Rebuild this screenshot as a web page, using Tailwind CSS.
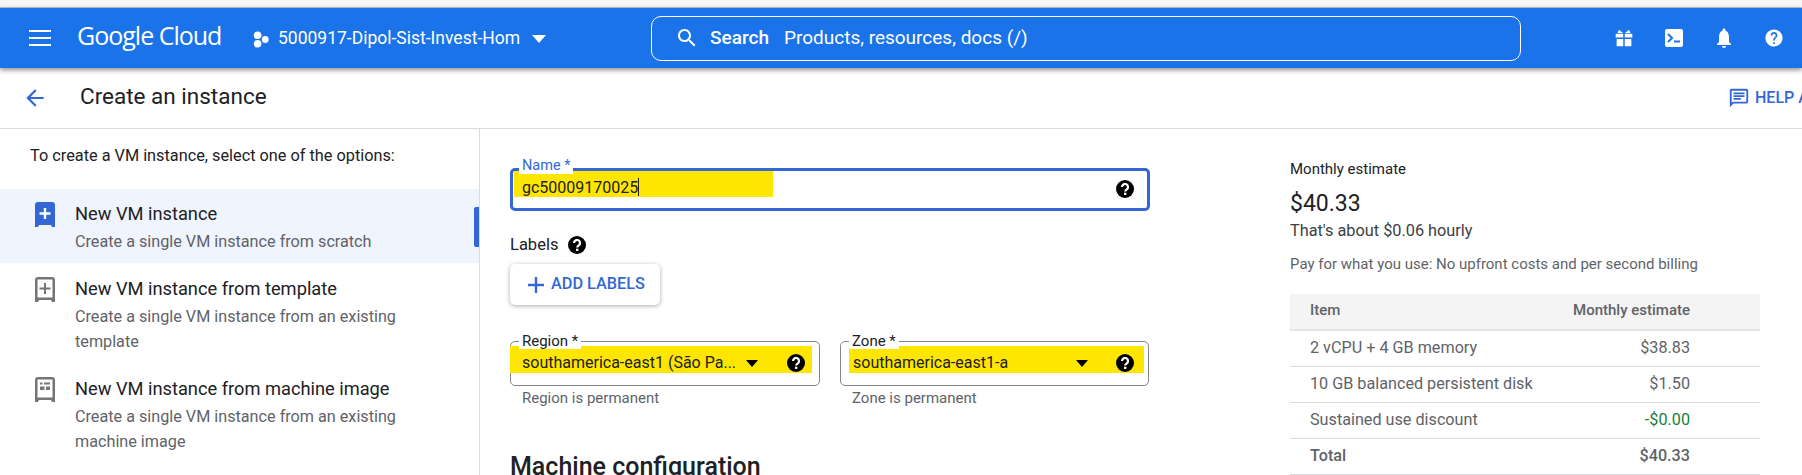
<!DOCTYPE html>
<html lang="en">
<head>
    <meta charset="UTF-8">
    <title>Create an instance</title>
    <script src="https://cdn.jsdelivr.net/npm/@tailwindcss/browser@4"></script>
</head>
<body class="h-[475px] overflow-hidden bg-white font-['Roboto',sans-serif] text-[#202124]">
    <div class="h-2 bg-[#f6f6f6] border-b border-[#c4c4c4]"></div>

    <!-- top bar -->
    <header class="relative z-10 h-[60px] flex items-center bg-[#1a73e8] text-white shadow-[0_2px_5px_rgba(0,0,0,0.45)]">
        <svg class="ml-[29px] w-[22px] h-[18px]" viewBox="0 0 22 18" fill="#fff"><rect y="1" width="22" height="2"/><rect y="8" width="22" height="2"/><rect y="15" width="22" height="2"/></svg>
        <span class="ml-[26px] w-[146px] text-[25px] font-['Open_Sans',sans-serif] tracking-[-1px] mt-[-5px] whitespace-nowrap">Google Cloud</span>
        <svg class="ml-[30px] mt-[3px] w-[16px] h-[17px]" viewBox="0 0 18 20" fill="#fff"><circle cx="5" cy="5" r="4.5"/><circle cx="5" cy="15" r="4.5"/><circle cx="14" cy="10" r="4"/></svg>
        <span class="ml-[9px] w-[245px] text-[17.5px] whitespace-nowrap">5000917-Dipol-Sist-Invest-Hom</span>
        <svg class="ml-[8px] mt-[2px] w-[16px] h-[8px]" viewBox="0 0 16 8" fill="#fff"><path d="M1 0h14L8 8z"/></svg>
        <div class="ml-[104px] w-[870px] h-[45px] flex items-center border border-white rounded-[10px]">
            <svg class="ml-[23px] w-[24px] h-[24px]" viewBox="0 0 24 24" fill="#fff"><path d="M15.5 14h-.79l-.28-.27C15.41 12.59 16 11.11 16 9.5 16 5.91 13.09 3 9.5 3S3 5.91 3 9.5 5.91 16 9.5 16c1.61 0 3.09-.59 4.23-1.57l.27.28v.79l5 4.99L20.49 19l-4.99-5zm-6 0C7.01 14 5 11.99 5 9.5S7.01 5 9.5 5 14 7.01 14 9.5 11.99 14 9.5 14z"/></svg>
            <span class="ml-[11px] text-[19px] font-medium">Search</span>
            <span class="ml-[15px] text-[19px]">Products, resources, docs (/)</span>
        </div>
        <div class="ml-[91px] flex items-center gap-[26px]">
            <svg class="w-[24px] h-[24px]" viewBox="-1 -1 26 26" fill="#fff"><path d="M3 7.500h8.200v4H3zM12.800 7.500H21v4h-8.200zM4 13h7.200v8H4zM12.800 13H20v8h-7.200z"/><path d="M6.500 3l4.500 3.500H5zM17.500 3L13 6.500h6z"/></svg>
            <svg class="w-[24px] h-[24px]" viewBox="0 0 24 24"><rect x="3" y="3" width="18" height="18" rx="2" fill="#fff"/><path d="M6 8l4 4-4 4" fill="none" stroke="#1a73e8" stroke-width="2"/><rect x="12" y="14.500" width="6" height="2" fill="#1a73e8"/></svg>
            <svg class="w-[24px] h-[24px]" viewBox="0 0 24 24" fill="#fff"><path d="M12 22c1.100 0 2-.9 2-2h-4c0 1.100.89 2 2 2zm5-6v-5c0-3.070-1.140-5.640-3.500-6.320V4c0-.83-.67-1.500-1.500-1.500s-1.500.67-1.500 1.500v.68C8.130 5.360 7 7.920 7 11v5l-2 2v1h14v-1l-2-2z"/></svg>
            <svg class="w-[24px] h-[24px]" viewBox="-2 -2 28 28" fill="#fff"><path d="M12 2C6.480 2 2 6.480 2 12s4.480 10 10 10 10-4.480 10-10S17.520 2 12 2zm1 17h-2v-2h2v2zm2.070-7.750l-.9.920C13.450 12.900 13 13.500 13 15h-2v-.5c0-1.100.45-2.100 1.170-2.830l1.240-1.260c.37-.36.59-.86.59-1.410 0-1.100-.9-2-2-2s-2 .9-2 2H8c0-2.210 1.790-4 4-4s4 1.790 4 4c0 .88-.36 1.680-.93 2.250z"/></svg>
        </div>
    </header>

    <!-- page title -->
    <div class="h-[61px] flex items-center border-b border-[#dadce0]">
        <svg class="ml-[22px] w-[26px] h-[26px]" viewBox="0 0 24 24" fill="#3367d6"><path d="M20 11H7.830l5.590-5.590L12 4l-8 8 8 8 1.410-1.410L7.830 13H20v-2z"/></svg>
        <h1 class="ml-[32px] mt-[-2px] text-[22.500px] whitespace-nowrap">Create an instance</h1>
        <div class="ml-auto w-[74px] flex items-center gap-[5px] overflow-hidden text-[#3367d6] text-[16px] font-medium whitespace-nowrap">
            <svg class="w-[22px] h-[22px] shrink-0" viewBox="0 0 24 24" fill="#3367d6"><path d="M20 2H4c-1.100 0-2 .9-2 2v18l4-4h14c1.100 0 2-.9 2-2V4c0-1.100-.9-2-2-2zm0 14H5.170L4 17.170V4h16v12zM6 12h8v2H6zm0-3h12v2H6zm0-3h12v2H6z"/></svg>
            <span>HELP A</span>
        </div>
    </div>

    <main class="flex">
        <!-- options -->
        <aside class="w-[480px] h-[346px] shrink-0 border-r border-[#dadce0]">
            <p class="ml-[30px] mt-[17px] h-[43px] text-[16.300px] leading-[20px] whitespace-nowrap">To create a VM instance, select one of the options:</p>
            <div class="relative h-[74px] flex gap-[20px] pl-[35px] bg-[#f0f4fc]">
                <svg class="mt-[13px] w-[20px] h-[25px] shrink-0" viewBox="0 0 20 25"><path d="M3 0h14a3 3 0 0 1 3 3v22h-3l-1-2H4l-1 2H0V3a3 3 0 0 1 3-3z" fill="#3367d6"/><path d="M8.800 6h2.400v4.300h4.300v2.400h-4.300V17H8.800v-4.300H4.500v-2.400h4.300z" fill="#fff"/></svg>
                <div>
                    <p class="mt-[13px] text-[18.250px] leading-[24px]">New VM instance</p>
                    <p class="mt-[4px] text-[16.200px] leading-[24px] text-[#5f6368] whitespace-nowrap">Create a single VM instance from scratch</p>
                </div>
                <div class="absolute right-0 top-[18px] w-[5px] h-[40px] rounded-l-[2px] bg-[#3367d6]"></div>
            </div>
            <div class="h-[99px] flex gap-[20px] pl-[35px]">
                <svg class="mt-[14px] w-[20px] h-[25px] shrink-0" viewBox="0 0 20 25"><path fill-rule="evenodd" d="M3 0h14a3 3 0 0 1 3 3v22h-3l-1-2H4l-1 2H0V3a3 3 0 0 1 3-3zM2.500 2.500v18h15v-18z" fill="#757575"/><path d="M9 6h2v4.500h4.500v2H11V17H9v-4.500H4.500v-2H9z" fill="#757575"/></svg>
                <div>
                    <p class="mt-[14px] text-[18.250px] leading-[24px] whitespace-nowrap">New VM instance from template</p>
                    <p class="mt-[3px] w-[345px] text-[16.200px] leading-[25px] text-[#5f6368]">Create a single VM instance from an existing template</p>
                </div>
            </div>
            <div class="flex gap-[20px] pl-[35px]">
                <svg class="mt-[15px] w-[20px] h-[25px] shrink-0" viewBox="0 0 20 25"><path fill-rule="evenodd" d="M3 0h14a3 3 0 0 1 3 3v22h-3l-1-2H4l-1 2H0V3a3 3 0 0 1 3-3zM2.500 2.500v18h15v-18z" fill="#757575"/><path d="M5 5.500h2.500v2H5zM9 5.500h6v2H9zM5 9.500h4.500v3.500H5zM11 9.500h4v3.500h-4z" fill="#757575"/></svg>
                <div>
                    <p class="mt-[15px] text-[18.250px] leading-[24px] whitespace-nowrap">New VM instance from machine image</p>
                    <p class="mt-[3px] w-[345px] text-[16.200px] leading-[25px] text-[#5f6368]">Create a single VM instance from an existing machine image</p>
                </div>
            </div>
        </aside>

        <!-- form -->
        <section class="w-[670px] shrink-0 pl-[30px] pt-[39px]">
            <div class="relative w-[640px] h-[43px] border-[3px] border-[#3367d6] rounded-[5px] flex items-start">
                <span class="absolute left-[6px] top-[-13px] px-[3px] bg-white text-[#3367d6] text-[14.500px] leading-[16px]">Name *</span>
                <div class="w-[259px] h-[26px] ml-[1px] bg-[#ffe600] pl-[8px] pt-[4px] text-[16px] leading-[26px]">gc50009170025<span class="inline-block w-px h-[18px] bg-[#202124] align-[-3px]"></span></div>
                <svg class="absolute right-[13px] top-[9px] w-[18px] h-[18px]" viewBox="0 0 18 18"><circle cx="9" cy="9" r="9" fill="#000"/><path d="M6 7a3 3 0 1 1 4.800 2.400C9.700 10.200 9.200 10.600 9.200 11.500" fill="none" stroke="#fff" stroke-width="2.200"/><rect x="8" y="12.700" width="2.400" height="2.200" fill="#fff"/></svg>
            </div>
            <div class="mt-[24px] flex items-center gap-[10px] h-[20px] text-[16.500px]">
                <span>Labels</span>
                <svg class="w-[18px] h-[18px]" viewBox="0 0 18 18"><circle cx="9" cy="9" r="9" fill="#000"/><path d="M6 7a3 3 0 1 1 4.800 2.400C9.700 10.200 9.200 10.600 9.200 11.500" fill="none" stroke="#fff" stroke-width="2.200"/><rect x="8" y="12.700" width="2.400" height="2.200" fill="#fff"/></svg>
            </div>
            <button class="mt-[9px] w-[150px] h-[41px] flex items-center pl-[17px] gap-[6px] bg-white rounded-[5px] shadow-[0_1px_4px_rgba(60,64,67,0.45)] text-[#3367d6] text-[16.300px] font-medium whitespace-nowrap">
                <svg class="w-[18px] h-[18px] shrink-0" viewBox="0 0 18 18" fill="#3367d6"><path d="M7.800 1h2.400v6.800H17v2.400h-6.800V17H7.800v-6.800H1V7.800h6.800z"/></svg>
                ADD LABELS
            </button>
            <div class="mt-[36px] flex gap-[20px]">
                <div class="w-[310px]">
                    <div class="relative h-[45px] border border-[#80868b] rounded-[5px] pt-[4px]">
                        <span class="absolute left-[8px] top-[-9px] px-[3px] bg-white text-[15px] leading-[16px]">Region *</span>
                        <div class="h-[27px] ml-[-1px] w-[302px] flex items-center bg-[#ffe600] pl-[12px] pt-[7px] text-[16px]">
                            <span class="w-[216px] whitespace-nowrap">southamerica-east1 (São Pa...</span>
                            <svg class="ml-[8px] w-[12px] h-[7px] shrink-0" viewBox="0 0 12 7" fill="#000"><path d="M0 0h12L6 7z"/></svg>
                            <svg class="ml-[29px] w-[18px] h-[18px] shrink-0" viewBox="0 0 18 18"><circle cx="9" cy="9" r="9" fill="#000"/><path d="M6 7a3 3 0 1 1 4.800 2.400C9.700 10.200 9.200 10.600 9.200 11.500" fill="none" stroke="#fff" stroke-width="2.200"/><rect x="8" y="12.700" width="2.400" height="2.200" fill="#fff"/></svg>
                        </div>
                    </div>
                    <p class="mt-[2px] ml-[12px] text-[15px] leading-[20px] text-[#5f6368]">Region is permanent</p>
                </div>
                <div class="w-[309px]">
                    <div class="relative h-[45px] border border-[#80868b] rounded-[5px] pt-[4px]">
                        <span class="absolute left-[8px] top-[-9px] px-[3px] bg-white text-[15px] leading-[16px]">Zone *</span>
                        <div class="h-[27px] ml-[8px] w-[295px] flex items-center bg-[#ffe600] pl-[4px] pt-[7px] text-[16px]">
                            <span class="w-[223px] whitespace-nowrap">southamerica-east1-a</span>
                            <svg class="w-[12px] h-[7px] shrink-0" viewBox="0 0 12 7" fill="#000"><path d="M0 0h12L6 7z"/></svg>
                            <svg class="ml-[28px] w-[18px] h-[18px] shrink-0" viewBox="0 0 18 18"><circle cx="9" cy="9" r="9" fill="#000"/><path d="M6 7a3 3 0 1 1 4.800 2.400C9.700 10.200 9.200 10.600 9.200 11.500" fill="none" stroke="#fff" stroke-width="2.200"/><rect x="8" y="12.700" width="2.400" height="2.200" fill="#fff"/></svg>
                        </div>
                    </div>
                    <p class="mt-[2px] ml-[12px] text-[15px] leading-[20px] text-[#5f6368]">Zone is permanent</p>
                </div>
            </div>
            <h2 class="mt-[43px] text-[25px] leading-[32px] font-medium whitespace-nowrap">Machine configuration</h2>
        </section>

        <!-- estimate -->
        <section class="ml-[140px] w-[470px] shrink-0 pt-[30px]">
            <p class="text-[15px] leading-[20px]">Monthly estimate</p>
            <p class="mt-[11px] text-[23px] leading-[28px]">$40.33</p>
            <p class="mt-[1px] text-[16.300px] leading-[24px] text-[#3c4043]">That's about $0.06 hourly</p>
            <p class="mt-[11px] text-[15px] leading-[20px] text-[#5f6368] whitespace-nowrap">Pay for what you use: No upfront costs and per second billing</p>
            <table class="mt-[20px] w-[470px] border-collapse text-[16.200px] text-[#5f6368]">
                <thead>
                    <tr class="h-[36px] bg-[#f4f4f4] border-b-2 border-[#e4e4e4] text-[15px]">
                        <th class="pl-[20px] pb-[2px] text-left font-medium">Item</th>
                        <th class="pr-[70px] pb-[2px] text-right font-medium">Monthly estimate</th>
                    </tr>
                </thead>
                <tbody>
                    <tr class="h-[36px] border-b border-[#dadce0]">
                        <td class="pl-[20px]">2 vCPU + 4 GB memory</td>
                        <td class="pr-[70px] text-right">$38.83</td>
                    </tr>
                    <tr class="h-[36px] border-b border-[#dadce0]">
                        <td class="pl-[20px]">10 GB balanced persistent disk</td>
                        <td class="pr-[70px] text-right">$1.50</td>
                    </tr>
                    <tr class="h-[36px] border-b border-[#dadce0]">
                        <td class="pl-[20px]">Sustained use discount</td>
                        <td class="pr-[70px] text-right text-[#188038]">-$0.00</td>
                    </tr>
                    <tr class="h-[36px] border-b border-[#dadce0] font-medium">
                        <td class="pl-[20px]">Total</td>
                        <td class="pr-[70px] text-right">$40.33</td>
                    </tr>
                </tbody>
            </table>
        </section>
    </main>
</body>
</html>
